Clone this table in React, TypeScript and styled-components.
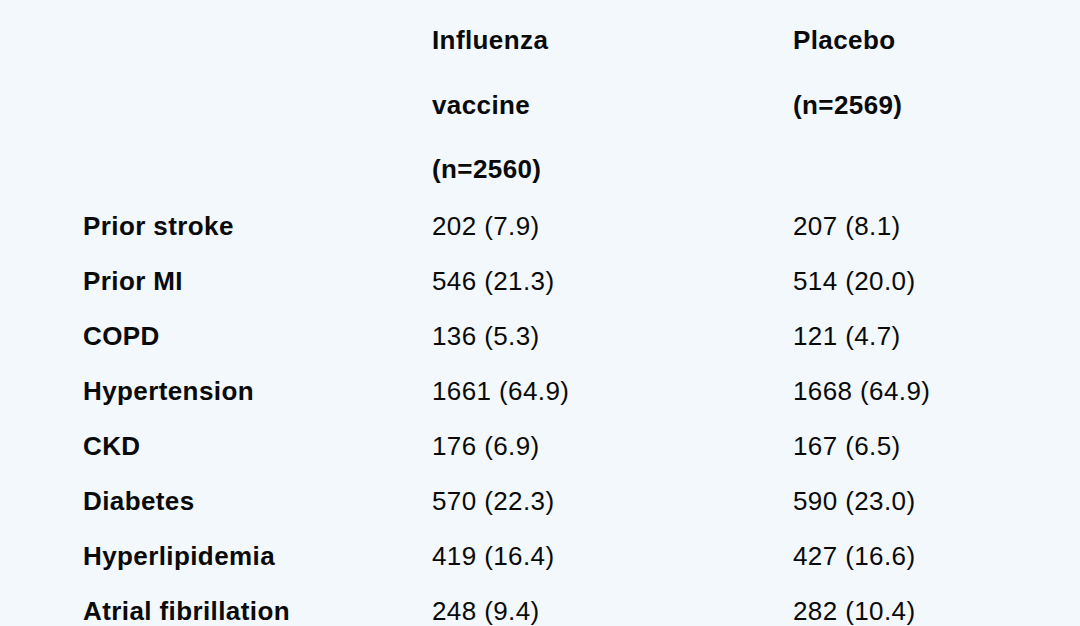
import React from "react";
import styled, { createGlobalStyle } from "styled-components";

const GlobalStyle = createGlobalStyle`
  html, body {
    margin: 0;
    padding: 0;
    background: #f2f8fb;
  }
  body {
    width: 1080px;
    height: 626px;
    overflow: hidden;
    font-family: "Liberation Sans", Arial, sans-serif;
    color: #0a0a0a;
  }
`;

const Page = styled.div`
  width: 1080px;
  height: 626px;
  box-sizing: border-box;
  padding: 8px 0 0 83px;
  background: #f2f8fb;
`;

const Table = styled.div`
  display: grid;
  grid-template-columns: 349px 361px 1fr;
  font-size: 26px;
  letter-spacing: 0.4px;
`;

const HeadCell = styled.div`
  font-weight: 700;
  line-height: 64.5px;
  max-width: 130px;
  margin-bottom: -3px;
`;

const Label = styled.div`
  font-weight: 700;
  line-height: 55px;
  white-space: nowrap;
`;

const Value = styled.div`
  font-weight: 400;
  line-height: 55px;
  white-space: nowrap;
`;

const rows: [string, string, string][] = [
  ["Prior stroke", "202 (7.9)", "207 (8.1)"],
  ["Prior MI", "546 (21.3)", "514 (20.0)"],
  ["COPD", "136 (5.3)", "121 (4.7)"],
  ["Hypertension", "1661 (64.9)", "1668 (64.9)"],
  ["CKD", "176 (6.9)", "167 (6.5)"],
  ["Diabetes", "570 (22.3)", "590 (23.0)"],
  ["Hyperlipidemia", "419 (16.4)", "427 (16.6)"],
  ["Atrial fibrillation", "248 (9.4)", "282 (10.4)"],
];

export default function App() {
  return (
    <>
      <GlobalStyle />
      <Page>
        <Table>
          <HeadCell />
          <HeadCell>Influenza vaccine (n=2560)</HeadCell>
          <HeadCell>Placebo (n=2569)</HeadCell>
          {rows.map(([label, a, b]) => (
            <React.Fragment key={label}>
              <Label>{label}</Label>
              <Value>{a}</Value>
              <Value>{b}</Value>
            </React.Fragment>
          ))}
        </Table>
      </Page>
    </>
  );
}
